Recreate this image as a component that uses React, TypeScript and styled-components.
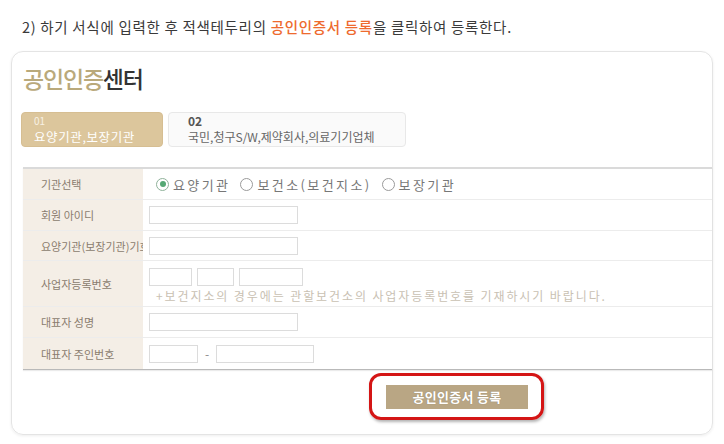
import React from "react";
import styled, { createGlobalStyle } from "styled-components";

const Global = createGlobalStyle`
  html, body { margin: 0; padding: 0; background: #ffffff; }
  body { font-family: "Noto Sans CJK KR", "Noto Sans", sans-serif; }
  * { box-sizing: border-box; }
`;

const Page = styled.div`
  width: 724px;
  height: 444px;
  padding: 17px 11px 0 11px;
  display: flex;
  flex-direction: column;
`;

const Intro = styled.p`
  margin: 0 0 14px 11px;
  font-size: 14.5px;
  line-height: 20px;
  color: #3a3a3a;
  letter-spacing: 0.7px;
  white-space: nowrap;
`;

const Hl = styled.span`
  color: #ee6a2e;
  font-weight: 500;
`;

const Card = styled.div`
  width: 702px;
  border: 1px solid #e4e4e4;
  border-radius: 12px;
  box-shadow: 0 1px 3px rgba(0, 0, 0, 0.07);
  padding: 10px 0 14px 9px;
  display: flex;
  flex-direction: column;
`;

const Title = styled.h1`
  margin: 0 0 18px 2px;
  font-size: 23px;
  line-height: 32px;
  font-weight: 500;
  color: #333;
  letter-spacing: -1.2px;
`;

const TitleAccent = styled.span`
  color: #b9a97b;
`;

const Tabs = styled.div`
  display: flex;
  gap: 5px;
  margin-bottom: 20px;
`;

const Tab = styled.div<{ $active?: boolean; $w: number }>`
  width: ${(p) => p.$w}px;
  height: 35px;
  border-radius: 4px;
  padding: 2px 0 0 ${(p) => (p.$active ? 12 : 19)}px;
  background: ${(p) => (p.$active ? "#dcc69c" : "#fafafa")};
  border: 1px solid ${(p) => (p.$active ? "#d6be92" : "#e8e8e8")};
  display: flex;
  flex-direction: column;
`;

const TabNum = styled.span<{ $active?: boolean }>`
  font-size: ${(p) => (p.$active ? 10 : 12)}px;
  line-height: 12px;
  height: 12px;
  font-weight: ${(p) => (p.$active ? 400 : 700)};
  color: ${(p) => (p.$active ? "#f8f1e4" : "#555")};
`;

const TabText = styled.span<{ $active?: boolean }>`
  margin-top: 2px;
  font-size: ${(p) => (p.$active ? 12.5 : 12)}px;
  line-height: 15px;
  color: ${(p) => (p.$active ? "#ffffff" : "#666")};
  letter-spacing: ${(p) => (p.$active ? "0.6px" : "0px")};
  white-space: nowrap;
`;

const Table = styled.div`
  margin-left: 2px;
  border-top: 2px solid #dadada;
  border-bottom: 1px solid #b9b9b9;
  box-shadow: 0 1px 1px rgba(0, 0, 0, 0.08);
  display: flex;
  flex-direction: column;
`;

const Row = styled.div<{ $h: number; $last?: boolean }>`
  display: flex;
  height: ${(p) => p.$h}px;
  border-bottom: ${(p) => (p.$last ? "none" : "1px solid #ececec")};
`;

const Label = styled.div`
  width: 120px;
  flex: none;
  background: #f4eee6;
  padding-left: 18px;
  display: flex;
  align-items: center;
  font-size: 11px;
  color: #8a7c6e;
  white-space: nowrap;
  overflow: hidden;
  letter-spacing: 0px;
`;

const Value = styled.div<{ $column?: boolean }>`
  flex: 1;
  padding-left: 6px;
  display: flex;
  flex-direction: ${(p) => (p.$column ? "column" : "row")};
  align-items: ${(p) => (p.$column ? "flex-start" : "center")};
  padding-top: ${(p) => (p.$column ? 7 : 0)}px;
  gap: ${(p) => (p.$column ? 2 : 0)}px;
`;

const Input = styled.div<{ $w: number }>`
  width: ${(p) => p.$w}px;
  height: 18px;
  border: 1px solid #dcdcdc;
  background: #fff;
`;

const Inline = styled.div<{ $gap: number }>`
  display: flex;
  align-items: center;
  gap: ${(p) => p.$gap}px;
`;

const Dash = styled.span`
  font-size: 12px;
  color: #888;
  padding: 0 2px;
`;

const Note = styled.span`
  margin-left: 7px;
  font-size: 12px;
  line-height: 16px;
  color: #c9c1b3;
  letter-spacing: 1.9px;
  white-space: nowrap;
`;

const RadioGroup = styled.div`
  display: flex;
  align-items: center;
  padding-left: 7px;
  gap: 10px;
`;

const RadioItem = styled.label`
  display: flex;
  align-items: center;
  gap: 4px;
  font-size: 13px;
  color: #777;
  letter-spacing: 2.4px;
  white-space: nowrap;
`;

const Circle = styled.span<{ $checked?: boolean }>`
  width: 13px;
  height: 13px;
  border-radius: 50%;
  border: 1px solid ${(p) => (p.$checked ? "#8fb29a" : "#9a9a9a")};
  display: flex;
  align-items: center;
  justify-content: center;
  &::after {
    content: "";
    width: 6px;
    height: 6px;
    border-radius: 50%;
    background: ${(p) => (p.$checked ? "#55a874" : "transparent")};
  }
`;

const Actions = styled.div`
  display: flex;
  padding-left: 348px;
  margin-top: 3px;
`;

const Highlight = styled.div`
  border: 3px solid #d41515;
  border-radius: 12px;
  padding: 7px 13px 8px 14px;
  box-shadow: 1px 2px 3px rgba(0, 0, 0, 0.3);
`;

const Button = styled.button`
  width: 142px;
  height: 24px;
  border: none;
  background: #b9a684;
  color: #fff;
  font-family: "Noto Sans CJK KR", sans-serif;
  font-size: 13px;
  font-weight: 700;
  letter-spacing: 0.3px;
  text-shadow: 0 0 1px rgba(0, 0, 0, 0.25);
  padding: 0;
  cursor: pointer;
`;

export default function App() {
  return (
    <>
      <Global />
      <Page>
        <Intro>
          2) 하기 서식에 입력한 후 적색테두리의 <Hl>공인인증서 등록</Hl>을 클릭하여 등록한다.
        </Intro>
        <Card>
          <Title>
            <TitleAccent>공인인증</TitleAccent>센터
          </Title>
          <Tabs>
            <Tab $active $w={142}>
              <TabNum $active>01</TabNum>
              <TabText $active>요양기관,보장기관</TabText>
            </Tab>
            <Tab $w={238}>
              <TabNum>02</TabNum>
              <TabText>국민,청구S/W,제약회사,의료기기업체</TabText>
            </Tab>
          </Tabs>
          <Table>
            <Row $h={31}>
              <Label>기관선택</Label>
              <Value>
                <RadioGroup>
                  <RadioItem>
                    <Circle $checked />
                    요양기관
                  </RadioItem>
                  <RadioItem>
                    <Circle />
                    보건소(보건지소)
                  </RadioItem>
                  <RadioItem>
                    <Circle />
                    보장기관
                  </RadioItem>
                </RadioGroup>
              </Value>
            </Row>
            <Row $h={31}>
              <Label>회원 아이디</Label>
              <Value>
                <Input $w={149} />
              </Value>
            </Row>
            <Row $h={30}>
              <Label>요양기관(보장기관)기호</Label>
              <Value>
                <Input $w={149} />
              </Value>
            </Row>
            <Row $h={46}>
              <Label>사업자등록번호</Label>
              <Value $column>
                <Inline $gap={5}>
                  <Input $w={43} />
                  <Input $w={37} />
                  <Input $w={64} />
                </Inline>
                <Note>+보건지소의 경우에는 관할보건소의 사업자등록번호를 기재하시기 바랍니다.</Note>
              </Value>
            </Row>
            <Row $h={31}>
              <Label>대표자 성명</Label>
              <Value>
                <Input $w={149} />
              </Value>
            </Row>
            <Row $h={31} $last>
              <Label>대표자 주인번호</Label>
              <Value>
                <Inline $gap={5}>
                  <Input $w={49} />
                  <Dash>-</Dash>
                  <Input $w={98} />
                </Inline>
              </Value>
            </Row>
          </Table>
          <Actions>
            <Highlight>
              <Button>공인인증서 등록</Button>
            </Highlight>
          </Actions>
        </Card>
      </Page>
    </>
  );
}
